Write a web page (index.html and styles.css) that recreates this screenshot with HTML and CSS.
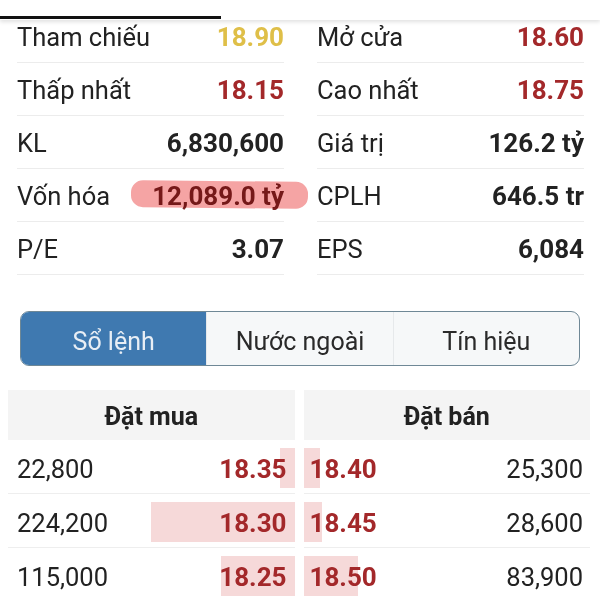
FILE: index.html
```html
<!DOCTYPE html>
<html lang="vi">
<head>
    <meta charset="UTF-8">
    <meta name="viewport" content="width=device-width, initial-scale=1.0">
    <title>Chi tiết cổ phiếu</title>
    <link rel="stylesheet" href="styles.css">
</head>
<body>
    <!-- thanh tab phía trên (đã cuộn) -->
    <div class="topbar">
        <div class="topbar-indicator"></div>
    </div>

    <!-- bảng thống kê -->
    <div class="stats-wrap">
        <div class="stats">
            <div class="stat-col">
                <div class="stat-row"><span class="label">Tham chiếu</span><span class="value ref">18.90</span></div>
                <div class="stat-row"><span class="label">Thấp nhất</span><span class="value down">18.15</span></div>
                <div class="stat-row"><span class="label">KL</span><span class="value">6,830,600</span></div>
                <div class="stat-row marked"><span class="label">Vốn hóa</span><span class="value marked-value">12,089.0 tỷ</span><span class="marker"></span></div>
                <div class="stat-row"><span class="label">P/E</span><span class="value">3.07</span></div>
            </div>
            <div class="stat-col">
                <div class="stat-row"><span class="label">Mở cửa</span><span class="value down">18.60</span></div>
                <div class="stat-row"><span class="label">Cao nhất</span><span class="value down">18.75</span></div>
                <div class="stat-row"><span class="label">Giá trị</span><span class="value">126.2 tỷ</span></div>
                <div class="stat-row"><span class="label">CPLH</span><span class="value">646.5 tr</span></div>
                <div class="stat-row"><span class="label">EPS</span><span class="value">6,084</span></div>
            </div>
        </div>
    </div>

    <!-- tab chọn -->
    <div class="tabs">
        <div class="tab active">Sổ lệnh</div>
        <div class="tab">Nước ngoài</div>
        <div class="tab">Tín hiệu</div>
    </div>

    <!-- sổ lệnh -->
    <div class="book">
        <div class="book-side buy">
            <div class="book-head">Đặt mua</div>
            <div class="book-row"><span class="qty">22,800</span><span class="price"><i class="bar" style="width: 15px"></i>18.35</span></div>
            <div class="book-row"><span class="qty">224,200</span><span class="price"><i class="bar" style="width: 144px"></i>18.30</span></div>
            <div class="book-row"><span class="qty">115,000</span><span class="price"><i class="bar" style="width: 74px"></i>18.25</span></div>
        </div>
        <div class="book-side sell">
            <div class="book-head">Đặt bán</div>
            <div class="book-row"><span class="price"><i class="bar" style="width: 16px"></i>18.40</span><span class="qty">25,300</span></div>
            <div class="book-row"><span class="price"><i class="bar" style="width: 18px"></i>18.45</span><span class="qty">28,600</span></div>
            <div class="book-row"><span class="price"><i class="bar" style="width: 54px"></i>18.50</span><span class="qty">83,900</span></div>
        </div>
    </div>
</body>
</html>
```

FILE: styles.css
```css
/* toàn trang */
body {
    margin: 0;
    font-family: Roboto, "Liberation Sans", Arial, sans-serif;
    background: #fff;
    color: #222;
    overflow: hidden;
}

/* thanh trên */
.topbar {
    position: relative;
    z-index: 2;
    height: 20px;
    background: #fff;
    box-shadow: 0 2px 4px rgba(0, 0, 0, 0.12);
}

.topbar-indicator {
    position: absolute;
    left: 0;
    bottom: 1px;
    width: 221px;
    height: 3px;
    background: #111;
}

/* thống kê */
.stats-wrap {
    overflow: hidden;
}

.stats {
    display: grid;
    grid-template-columns: 1fr 1fr;
    column-gap: 33px;
    margin-top: -10px;
    padding: 0 16px 0 17px;
}

.stat-row {
    position: relative;
    display: flex;
    justify-content: space-between;
    align-items: center;
    height: 50px;
    padding-top: 2px;
    border-bottom: 1px solid #ececec;
}

.label {
    font-size: 25.5px;
    color: #222;
}

.value {
    font-size: 26px;
    font-weight: bold;
    color: #222;
}

.value.ref {
    color: #dfbf48;
}

.value.down {
    color: #a3282a;
}

.marked-value {
    color: #7a2626;
}

/* vệt bút đánh dấu */
.marker {
    position: absolute;
    left: 114px;
    top: 12px;
    width: 177px;
    height: 27px;
    border-radius: 12px;
    background: rgba(240, 115, 115, 0.65);
    mix-blend-mode: multiply;
    transform: rotate(0.6deg);
}

/* tab */
.tabs {
    display: flex;
    margin: 36px 20px 0 20px;
    height: 53px;
    border: 1.5px solid #6f8896;
    border-radius: 9px;
    overflow: hidden;
    background: #f6f8f9;
}

.tab {
    flex: 1;
    display: flex;
    align-items: center;
    justify-content: center;
    padding-top: 6px;
    font-size: 25px;
    color: #2a2a2a;
    border-left: 1px solid #e6e9eb;
}

.tab:first-child {
    border-left: none;
}

.tab.active {
    background: #3f79b0;
    color: #e8eef5;
}

/* sổ lệnh */
.book {
    display: grid;
    grid-template-columns: 1fr 1fr;
    column-gap: 9px;
    margin-top: 24px;
    padding: 0 10px 0 8px;
}

.book-head {
    height: 50px;
    display: flex;
    align-items: center;
    justify-content: center;
    padding-top: 2px;
    box-sizing: border-box;
    background: #f4f4f4;
    font-size: 25px;
    font-weight: bold;
    color: #222;
}

.book-row {
    display: flex;
    justify-content: space-between;
    align-items: stretch;
    height: 53px;
    border-bottom: 1px solid #eeeeee;
}

.qty {
    display: flex;
    align-items: center;
    padding-top: 4px;
    font-size: 25.5px;
    color: #222;
}

.price {
    position: relative;
    display: flex;
    align-items: center;
    padding-top: 4px;
    font-size: 26px;
    font-weight: bold;
    color: #a3282a;
}

.bar {
    position: absolute;
    top: 8px;
    bottom: 5px;
    background: #f6d9d9;
    z-index: -1;
}

.buy .qty {
    padding-left: 9px;
}

.buy .price {
    padding-right: 8px;
}

.buy .bar {
    right: 0;
}

.sell .price {
    padding-left: 6px;
}

.sell .qty {
    padding-right: 7px;
}

.sell .bar {
    left: 0;
}
```
